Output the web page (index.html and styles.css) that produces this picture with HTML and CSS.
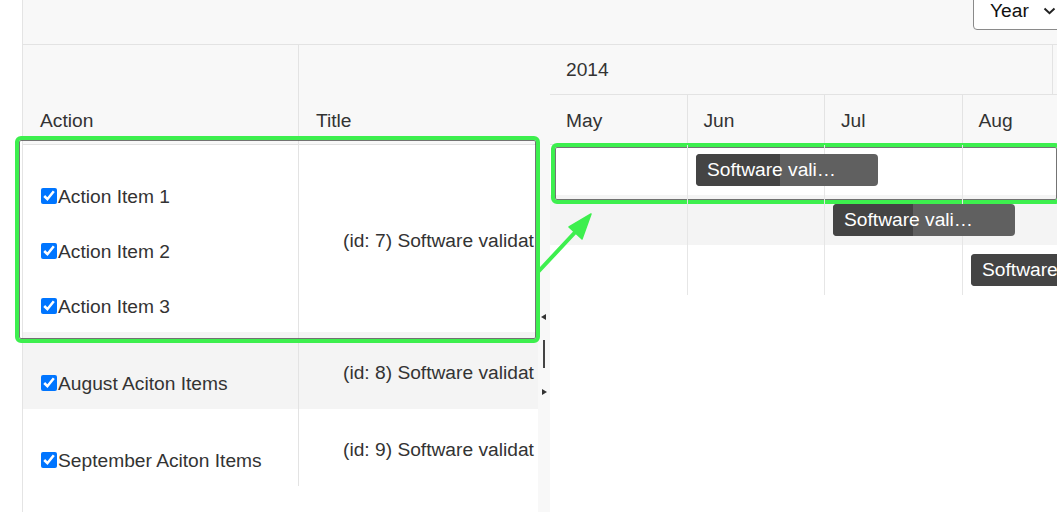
FILE: index.html
```html
<!DOCTYPE html>
<html>
<head>
<meta charset="utf-8">
<link rel="stylesheet" href="styles.css">
</head>
<body>
<div class="app">
  <div class="shell">
    <div class="toolbar">
      <div class="select">Year
        <svg class="chev" width="13" height="8" viewBox="0 0 13 8"><path d="M1.5 1.5 L6.5 6.2 L11.5 1.5" fill="none" stroke="#222" stroke-width="2"/></svg>
      </div>
    </div>
    <div class="main">
      <div class="grid">
        <div class="ghead">
          <div class="hcell c-action">Action</div>
          <div class="hcell c-title">Title</div>
        </div>
        <div class="grow">
          <div class="cell c-action items">
            <label class="item"><input type="checkbox" checked>Action Item 1</label>
            <label class="item"><input type="checkbox" checked>Action Item 2</label>
            <label class="item"><input type="checkbox" checked>Action Item 3</label>
          </div>
          <div class="cell c-title ttl">(id: 7) Software validat</div>
        </div>
        <div class="grow alt">
          <div class="cell c-action items">
            <label class="item"><input type="checkbox" checked>August Aciton Items</label>
          </div>
          <div class="cell c-title ttl">(id: 8) Software validat</div>
        </div>
        <div class="grow">
          <div class="cell c-action items">
            <label class="item"><input type="checkbox" checked>September Aciton Items</label>
          </div>
          <div class="cell c-title ttl">(id: 9) Software validat</div>
        </div>
      </div>
      <div class="splitter">
        <span class="tri tri-l"></span>
        <span class="grip"></span>
        <span class="tri tri-r"></span>
      </div>
      <div class="gantt">
        <div class="yearrow"><div class="year">2014</div></div>
        <div class="monthrow">
          <div class="month">May</div>
          <div class="month">Jun</div>
          <div class="month">Jul</div>
          <div class="month">Aug</div>
        </div>
        <div class="gbody">
          <div class="lines">
            <div class="col"></div><div class="col"></div><div class="col"></div><div class="col"></div>
          </div>
          <div class="trow">
            <div class="bar" style="left:146px;width:182px"><div class="prog" style="width:84px"></div><span class="blabel">Software vali…</span></div>
          </div>
          <div class="trow alt">
            <div class="bar" style="left:283px;width:182px"><div class="prog" style="width:80px"></div><span class="blabel">Software vali…</span></div>
          </div>
          <div class="trow">
            <div class="bar bar-cut" style="left:421px;width:86px"><div class="prog" style="width:86px"></div><span class="blabel">Software</span></div>
          </div>
        </div>
      </div>
    </div>
  </div>

  <div class="hl hl-left"></div>
  <div class="hl hl-right"></div>
  <svg class="arrow" width="1057" height="512" viewBox="0 0 1057 512">
    <line x1="538" y1="272" x2="580" y2="227" stroke="#3def4e" stroke-width="4" stroke-linecap="round"/>
    <polygon points="591,214 569,227 582,239" fill="#3def4e" stroke="#3def4e" stroke-width="1.5" stroke-linejoin="round"/>
  </svg>
</div>
</body>
</html>
```

FILE: styles.css
```css
* { box-sizing: border-box; }
html, body { margin: 0; padding: 0; background: #fff; }
body {
  font-family: "Liberation Sans", Arial, sans-serif;
  font-size: 19.2px;
  color: #333;
}
.app {
  position: relative;
  width: 1057px;
  height: 512px;
  overflow: hidden;
}
.shell {
  margin-left: 22px;
  border-left: 1px solid #e4e4e4;
  height: 512px;
  display: flex;
  flex-direction: column;
}
.toolbar {
  height: 45px;
  background: #f8f8f8;
  border-bottom: 1px solid #e3e3e3;
  display: flex;
  justify-content: flex-end;
  flex: none;
}
.select {
  margin-top: -8px;
  margin-right: -20px;
  height: 38px;
  width: 104px;
  background: #fff;
  border: 1px solid #8a8a8a;
  border-radius: 4px;
  padding: 0 0 0 16px;
  line-height: 22px;
  color: #111;
  display: flex;
  align-items: center;
  gap: 14px;
}
.chev { flex: none; }
.main {
  flex: 1;
  display: flex;
  min-height: 0;
}
.grid {
  width: 515px;
  flex: none;
  display: flex;
  flex-direction: column;
}
.ghead {
  height: 100px;
  background: #f8f8f8;
  border-bottom: 1px solid #e3e3e3;
  display: flex;
}
.hcell {
  display: flex;
  align-items: flex-end;
  padding: 0 0 12px 17px;
  line-height: 22px;
}
.c-action {
  width: 276px;
  border-right: 1px solid #e3e3e3;
  flex: none;
}
.c-title {
  flex: 1;
  min-width: 0;
}
.grow {
  display: flex;
  background: #fff;
}
.grow.alt { background: #f4f4f4; }
.items {
  padding: 40px 0 13px 18px;
  display: flex;
  flex-direction: column;
  gap: 31px;
}
.item {
  height: 24px;
  line-height: 24px;
  display: flex;
  align-items: center;
  white-space: nowrap;
}
.item input {
  width: 16px;
  height: 16px;
  margin: -2px 1px 0 0;
  flex: none;
}
.ttl {
  display: flex;
  align-items: center;
  padding-left: 44px;
  padding-top: 4px;
  white-space: nowrap;
  overflow: hidden;
}
.splitter {
  width: 12px;
  flex: none;
  background: #f8f8f8;
  display: flex;
  flex-direction: column;
  align-items: center;
  padding-top: 269px;
}
.tri {
  width: 0;
  height: 0;
  border-top: 3.5px solid transparent;
  border-bottom: 3.5px solid transparent;
}
.tri-l { border-right: 5px solid #333; margin-left: -1px; }
.tri-r { border-left: 5px solid #333; margin-left: 1px; }
.grip {
  width: 2px;
  height: 28px;
  background: #444;
  margin: 20px 0 21px 0;
}
.gantt {
  flex: 1;
  min-width: 0;
  display: flex;
  flex-direction: column;
  overflow: hidden;
}
.yearrow {
  height: 50px;
  background: #f8f8f8;
  border-bottom: 1px solid #e3e3e3;
  flex: none;
}
.year {
  width: 503px;
  height: 49px;
  border-right: 1px solid #e3e3e3;
  padding: 14px 0 0 16px;
  line-height: 22px;
}
.monthrow {
  height: 50px;
  background: #f8f8f8;
  border-bottom: 1px solid #e3e3e3;
  display: flex;
  flex: none;
}
.month {
  width: 137.5px;
  flex: none;
  border-right: 1px solid #e3e3e3;
  padding: 15px 0 0 16px;
  line-height: 22px;
}
.gbody {
  position: relative;
}
.lines {
  position: absolute;
  left: 0;
  top: 0;
  height: 150px;
  display: flex;
  z-index: 1;
  pointer-events: none;
}
.col {
  width: 137.5px;
  flex: none;
  border-right: 1px solid #e6e6e6;
}
.trow {
  position: relative;
  height: 50px;
  background: #fff;
}
.trow.alt { background: #f4f4f4; }
.bar {
  position: absolute;
  top: 9px;
  height: 32px;
  background: #606060;
  border-radius: 4px;
  overflow: hidden;
  z-index: 2;
  color: #fff;
}
.bar-cut { border-radius: 4px 0 0 4px; }
.prog {
  position: absolute;
  left: 0;
  top: 0;
  bottom: 0;
  background: #444;
}
.blabel {
  position: relative;
  display: block;
  padding: 0 0 0 11px;
  line-height: 32px;
  white-space: nowrap;
}
.hl {
  position: absolute;
  border: 4px solid #3def4e;
  border-radius: 6px;
  box-shadow: inset 0 0 0 1px rgba(70, 70, 70, 0.75);
  pointer-events: none;
}
.hl-left { left: 15px; top: 136px; width: 525px; height: 207px; }
.hl-right { left: 551px; top: 143px; width: 510px; height: 61px; }
.arrow {
  position: absolute;
  left: 0;
  top: 0;
  pointer-events: none;
}
```
